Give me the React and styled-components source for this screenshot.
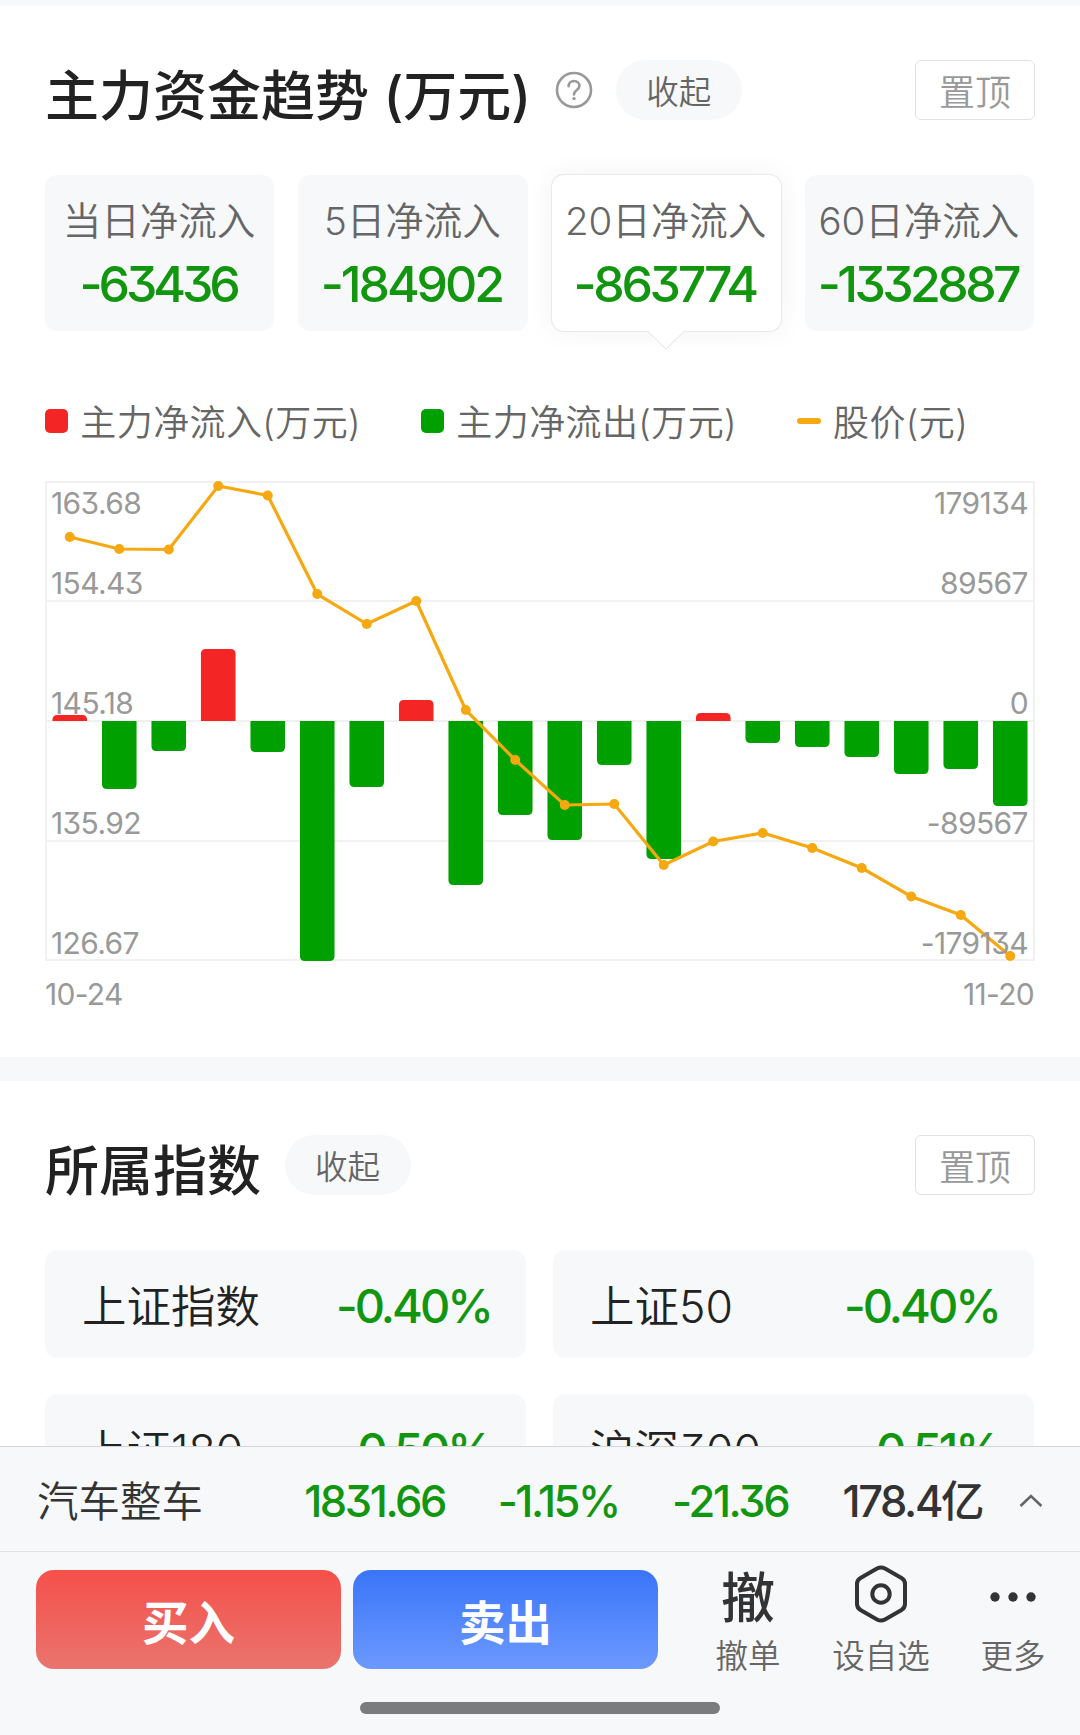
import React, {PureComponent} from 'react';
import styled, {createGlobalStyle} from 'styled-components';

const GlobalStyle = createGlobalStyle`
    body {
      margin: 0;
      background: #fff;
      font-family: Inter, 'Noto Sans CJK SC', sans-serif;
      font-feature-settings: 'cv09';
      font-weight: 350;
      color: #222;
    }
`;

const RED = '#f42525';
const GREEN = '#00a000';
const ORANGE = '#f5a80f';

const periods = [
    {label: '当日净流入', value: '-63436', tracking: -4.1},
    {label: '5日净流入', value: '-184902', tracking: -3.1},
    {label: '20日净流入', value: '-863774', tracking: -3.3, active: true},
    {label: '60日净流入', value: '-1332887', tracking: -3.6}
];

const indexes = [
    {name: '上证指数', change: '-0.40%'},
    {name: '上证50', change: '-0.40%'},
    {name: '上证180', change: '-0.50%'},
    {name: '沪深300', change: '-0.51%'}
];

// bar height in px from the zero line, positive = inflow
const flows = [6, -68, -30, 72, -31, -240, -66, 21, -164, -94, -119, -44, -138, 8, -22, -26, -36, -53, -48, -85];

// y of the price for each day
const prices = [56, 68, 68.5, 5, 14.5, 113, 143, 120, 229, 279, 324, 323, 384, 360.5, 352, 367, 387, 415.5, 434, 475];

const ticks = [
    {y: 32.5, price: '163.68', flow: '179134'},
    {y: 112.5, price: '154.43', flow: '89567'},
    {y: 232.5, price: '145.18', flow: '0'},
    {y: 352.5, price: '135.92', flow: '-89567'},
    {y: 472.5, price: '126.67', flow: '-179134'}
];

const Screen = styled.div`
    display: flex;
    flex-direction: column;
    width: 1080px;
    height: 1735px;
    overflow: hidden;
    background: #fff;
`;

const Content = styled.main`
    flex: 1;
    min-height: 0;
    overflow: hidden;
    border-top: 6px solid #f7f8fa;
`;

const Section = styled.section`
    padding: 54px 45px 0;
    height: ${props => props.height}px;
    box-sizing: border-box;
    border-bottom: 24px solid #f7f8fa;
`;

const SectionHeader = styled.header`
    display: flex;
    align-items: center;
    height: 60px;
`;

const Title = styled.h2`
    margin: 0;
    padding-top: 13px;
    font-size: 54px;
    line-height: 60px;
    font-weight: 500;
    white-space: pre;
`;

const HelpIcon = styled.svg`
    margin: 0 -1px 0 24px;
    width: 38px;
    height: 38px;
`;

const Toggle = styled.button`
    margin-left: 24px;
    width: 126px;
    height: 60px;
    padding: 6px 1px 0 0;
    border: 0;
    border-radius: 30px;
    background: #f7f8fa;
    color: #666;
    font: inherit;
    font-size: 32.5px;
    line-height: 54px;
`;

const PinButton = styled.button`
    margin-left: auto;
    width: 120px;
    height: 60px;
    padding: 6px 0 0;
    border: 1px solid #e2e2e2;
    border-radius: 6px;
    background: #fff;
    color: #999;
    font: inherit;
    font-size: 36px;
    line-height: 52px;
`;

const Periods = styled.div`
    display: grid;
    grid-template-columns: repeat(4, 1fr);
    gap: 24px;
    margin: 55px 1px 0 0;
`;

const Period = styled.div`
    position: relative;
    height: 156px;
    border-radius: 12px;
    text-align: center;
    white-space: nowrap;
    background: ${props => props.$active ? '#fff' : '#f7f8fa'};
    box-shadow: ${props => props.$active ? '0 0 0 1px #e9e9ea, 0 0 30px rgba(0, 0, 0, .06)' : 'none'};
`;

const PeriodLabel = styled.div`
    padding: 17px 1px 0 0;
    font-size: 38.5px;
    line-height: 58px;
    color: #666;
`;

const PeriodValue = styled.div`
    padding: 1px 3px 0 0;
    font-size: 50px;
    line-height: 66px;
    font-weight: 500;
    letter-spacing: ${props => props.$tracking}px;
    color: #12960f;
`;

const Pointer = styled.svg`
    position: absolute;
    left: 95px;
    top: 155px;
    width: 38px;
    height: 20px;
`;

const Legend = styled.div`
    display: flex;
    margin-top: 66px;
    gap: 60px;
`;

const LegendItem = styled.div`
    display: flex;
    align-items: center;
    flex: none;
    width: ${props => props.width}px;
    height: 48px;
    font-size: 36px;
    line-height: 48px;
    letter-spacing: .4px;
    white-space: nowrap;
    color: #666;
`;

const LegendText = styled.span`
    padding-top: 4px;
`;

const Swatch = styled.span`
    width: 24px;
    height: ${props => props.$line ? 6 : 24}px;
    border-radius: ${props => props.$line ? 3 : 5}px;
    margin-right: 12px;
    background: ${props => props.color};
`;

const ChartSvg = styled.svg`
    display: block;
    margin-top: 36px;
    width: 990px;
    height: 480px;
    overflow: visible;

    text {
      font-size: 30px;
      font-weight: 400;
      letter-spacing: -.6px;
      fill: #999;
    }
`;

const Dates = styled.div`
    display: flex;
    justify-content: space-between;
    margin: 13px 1px 0 0;
    font-size: 30px;
    line-height: 40px;
    font-weight: 400;
    letter-spacing: -.7px;
    color: #999;
`;

const IndexGrid = styled.div`
    display: grid;
    grid-template-columns: 1fr 1fr;
    gap: 36px 27px;
    margin: 55px 1px 0 0;
`;

const IndexCard = styled.div`
    display: flex;
    justify-content: space-between;
    align-items: center;
    height: 108px;
    padding: 0 35px 0 37px;
    box-sizing: border-box;
    border-radius: 12px;
    background: #f7f8fa;
    font-size: 44.5px;
    line-height: 60px;
`;

const IndexName = styled.span`
    padding-top: 5px;
`;

const Change = styled.span`
    padding-top: 3px;
    font-size: 47px;
    font-weight: 500;
    letter-spacing: -3px;
    color: #12960f;
`;

const Ticker = styled.div`
    display: flex;
    align-items: center;
    height: 106px;
    box-sizing: border-box;
    border-top: 1px solid #d3d5d8;
    border-bottom: 1px solid #e2e3e6;
    background: #f7f8fa;
    padding: 3px 37px 0;
    color: #333;
    font-size: 41.5px;
    line-height: 52px;
    white-space: nowrap;
`;

const TickerName = styled.span`
    width: 268px;
    padding-top: 2px;
`;

const TickerValue = styled.span`
    width: ${props => props.width}px;
    font-size: 43.5px;
    font-weight: 500;
    letter-spacing: -2.4px;
    color: ${props => props.color};
`;

const Footer = styled.footer`
    height: 183px;
    background: #f7f8fa;
`;

const Actions = styled.div`
    display: flex;
    height: 132px;
    padding-left: 36px;
    align-items: flex-start;
`;

const TradeButton = styled.button`
    flex: none;
    width: 305px;
    height: 99px;
    margin: 18px 12px 0 0;
    padding: 0;
    border: 0;
    border-radius: 18px;
    color: #fff;
    font: inherit;
    font-size: 46.5px;
    font-weight: 700;
    background: linear-gradient(${props => props.from}, ${props => props.to});
`;

const Tools = styled.div`
    display: flex;
    flex: 1;
    margin-left: 10px;
`;

const Tool = styled.div`
    display: flex;
    flex-direction: column;
    align-items: center;
    width: ${props => props.width}px;
    padding-top: 10px;
    color: #666;
    font-size: 32.5px;
    line-height: 44px;

    svg, strong {
      height: 66px;
      margin-bottom: 7px;
    }

    strong {
      font-size: 54px;
      font-weight: 500;
      line-height: 73px;
      color: #333;
    }
`;

const HomeIndicator = styled.div`
    width: 360px;
    height: 12px;
    margin: 18px auto 0;
    border-radius: 6px;
    background: #7b7c7e;
`;

const barPath = (x, h) => {
    const w = 34.6;
    const r = 5;
    const end = 240 - h;
    const s = h > 0 ? 1 : -1;
    return `M${x} 240V${end + s * r}Q${x} ${end} ${x + r} ${end}H${x + w - r}Q${x + w} ${end} ${x + w} ${end + s * r}V240Z`;
};

const dayX = i => 24.75 + i * 49.5;

class FlowChart extends PureComponent {
    render() {
        return (
            <ChartSvg viewBox='0 0 990 480'>
                <rect x='1' y='1' width='988' height='478' fill='none' stroke='#f1f1f1' strokeWidth='2'/>
                {[120, 240, 360].map(y =>
                    <path key={y} d={`M0 ${y}H990`} stroke='#f1f1f1' strokeWidth='2'/>
                )}
                {flows.map((h, i) =>
                    <path key={i} d={barPath(dayX(i) - 17.3, h)} fill={h > 0 ? RED : GREEN}/>
                )}
                <polyline points={prices.map((y, i) => `${dayX(i)},${y}`).join(' ')}
                          fill='none' stroke={ORANGE} strokeWidth='3.2'/>
                {ticks.map(tick =>
                    <g key={tick.y}>
                        <text x='6' y={tick.y}>{tick.price}</text>
                        <text x='983' y={tick.y} textAnchor='end'>{tick.flow}</text>
                    </g>
                )}
                {prices.map((y, i) => <circle key={i} cx={dayX(i)} cy={y} r='5' fill={ORANGE}/>)}
            </ChartSvg>
        );
    }
}

class App extends PureComponent {
    render() {
        return (
            <Screen>
                <GlobalStyle/>
                <Content>
                    <Section height={1075}>
                        <SectionHeader>
                            <Title>主力资金趋势 (万元)</Title>
                            <HelpIcon viewBox='0 0 38 38' fill='none' stroke='#999' strokeWidth='2.6'>
                                <circle cx='19' cy='19' r='17'/>
                                <path d='M13.6 15.2c0-3 2.3-5.2 5.4-5.2s5.4 2 5.4 4.9c0 4-5.4 4.3-5.4 8.6' strokeLinecap='round'/>
                                <circle cx='19' cy='27.6' r='1.7' fill='#999' stroke='none'/>
                            </HelpIcon>
                            <Toggle>收起</Toggle>
                            <PinButton>置顶</PinButton>
                        </SectionHeader>
                        <Periods>
                            {periods.map(period =>
                                <Period key={period.label} $active={period.active}>
                                    <PeriodLabel>{period.label}</PeriodLabel>
                                    <PeriodValue $tracking={period.tracking}>{period.value}</PeriodValue>
                                    {period.active &&
                                    <Pointer viewBox='0 0 38 20'>
                                        <path d='M0 0L19 19L38 0Z' fill='#fff'/>
                                        <path d='M1 1.5L19 19L37 1.5' fill='none' stroke='#e4e4e4'/>
                                    </Pointer>}
                                </Period>
                            )}
                        </Periods>
                        <Legend>
                            <LegendItem width={316}><Swatch color={RED}/><LegendText>主力净流入(万元)</LegendText></LegendItem>
                            <LegendItem width={316}><Swatch color={GREEN}/><LegendText>主力净流出(万元)</LegendText></LegendItem>
                            <LegendItem width={180}><Swatch color={ORANGE} $line/><LegendText>股价(元)</LegendText></LegendItem>
                        </Legend>
                        <FlowChart/>
                        <Dates>
                            <span>10-24</span>
                            <span>11-20</span>
                        </Dates>
                    </Section>
                    <Section height={600}>
                        <SectionHeader>
                            <Title>所属指数</Title>
                            <Toggle>收起</Toggle>
                            <PinButton>置顶</PinButton>
                        </SectionHeader>
                        <IndexGrid>
                            {indexes.map(index =>
                                <IndexCard key={index.name}>
                                    <IndexName>{index.name}</IndexName>
                                    <Change>{index.change}</Change>
                                </IndexCard>
                            )}
                        </IndexGrid>
                    </Section>
                </Content>
                <Ticker>
                    <TickerName>汽车整车</TickerName>
                    <TickerValue width={194} color='#12960f'>1831.66</TickerValue>
                    <TickerValue width={175} color='#12960f'>-1.15%</TickerValue>
                    <TickerValue width={171} color='#12960f'>-21.36</TickerValue>
                    <TickerValue width={177} color='#333'>178.4亿</TickerValue>
                    <svg width='24' height='14' viewBox='0 0 24 14' fill='none' stroke='#666' strokeWidth='2.6'>
                        <path d='M1.5 12L12 2L22.5 12'/>
                    </svg>
                </Ticker>
                <Footer>
                    <Actions>
                        <TradeButton from='#f5504a' to='#ea746e'>买入</TradeButton>
                        <TradeButton from='#3a75f8' to='#6c99ff'>卖出</TradeButton>
                        <Tools>
                            <Tool width={136}>
                                <strong>撤</strong>
                                撤单
                            </Tool>
                            <Tool width={130}>
                                <svg width='66' viewBox='0 0 66 66' fill='none' stroke='#333' strokeWidth='4'>
                                    <path d='M29 6.5Q33 4.300 37 6.500L53.500 16Q57 18 57 22V42Q57 46 53.500 48L37 57.500Q33 59.700 29 57.500L12.500 48Q9 46 9 42V22Q9 18 12.500 16Z'/>
                                    <circle cx='33' cy='32' r='8.700'/>
                                </svg>
                                设自选
                            </Tool>
                            <Tool width={134}>
                                <svg width='66' viewBox='0 0 66 66' fill='#333'>
                                    <circle cx='15' cy='35' r='4.700'/>
                                    <circle cx='33' cy='35' r='4.700'/>
                                    <circle cx='51' cy='35' r='4.700'/>
                                </svg>
                                更多
                            </Tool>
                        </Tools>
                    </Actions>
                    <HomeIndicator/>
                </Footer>
            </Screen>
        );
    }
}

export default App;
